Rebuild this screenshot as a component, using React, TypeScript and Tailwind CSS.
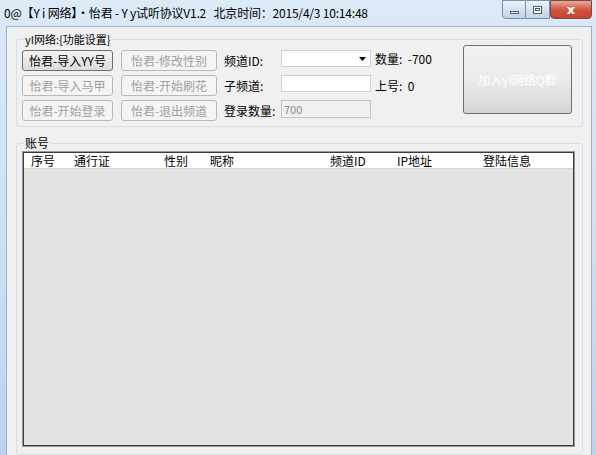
import React from 'react'

const FONT = "font-['Noto_Sans_CJK_SC','Noto_Sans',sans-serif]"

const BUTTONS = [
  { label: '怡君-导入YY号', on: true },
  { label: '怡君-修改性别', on: false },
  { label: '怡君-导入马甲', on: false },
  { label: '怡君-开始刷花', on: false },
  { label: '怡君-开始登录', on: false },
  { label: '怡君-退出频道', on: false },
]

const COLUMNS = [
  { label: '序号', w: 'w-[43px]' },
  { label: '通行证', w: 'w-[90px]' },
  { label: '性别', w: 'w-[46px]' },
  { label: '昵称', w: 'w-[120px]' },
  { label: '频道ID', w: 'w-[67px]' },
  { label: 'IP地址', w: 'w-[86px]' },
  { label: '登陆信息', w: 'flex-1' },
]

function WinButton({ kind }: { kind: 'min' | 'max' | 'close' }) {
  if (kind === 'close') {
    return (
      <div className="w-[42px] h-[19px] rounded-b-[4px] border border-[#7a4a4a] bg-gradient-to-b from-[#e9a99c] via-[#d2553f] to-[#c7422c] flex items-center justify-center">
        <span className="text-white text-[13px] font-bold leading-none font-['DejaVu_Sans',sans-serif]">x</span>
      </div>
    )
  }
  return (
    <div className={`w-[24px] h-[19px] border border-[#7e8ea3] ${kind === 'min' ? 'rounded-bl-[4px]' : 'border-l-0'} bg-gradient-to-b from-[#eef3f9] via-[#d6e2ef] to-[#c3d3e6] flex items-center justify-center`}>
      {kind === 'min' ? (
        <div className="w-[9px] h-[3px] bg-white border border-[#4d5c70] mt-[5px]" />
      ) : (
        <div className="w-[9px] h-[8px] bg-white border border-[#4d5c70] flex items-center justify-center">
          <div className="w-[5px] h-[3px] border border-[#4d5c70]" />
        </div>
      )}
    </div>
  )
}

export default function App() {
  return (
    <div className={`w-[596px] h-[455px] overflow-hidden flex flex-col bg-gradient-to-b from-[#dce9f7] via-[#cfe0f3] to-[#bcd3ec] text-[12px] text-black ${FONT}`}>
      {/* title bar */}
      <div className="h-[26px] shrink-0 flex items-start">
        <div className="pl-[4px] pt-[5px] leading-[16px] whitespace-pre text-[12px] tracking-[-0.2px]">
          0@【Y i 网络】·怡君 - Y y试听协议V1.2   北京时间：2015/4/3 10:14:48
        </div>
        <div className="ml-auto mr-[4px] flex">
          <WinButton kind="min" />
          <WinButton kind="max" />
          <WinButton kind="close" />
        </div>
      </div>

      {/* client area */}
      <div className="flex-1 ml-[6px] mr-[4px] bg-[#f0f0f0] border border-[#9fb1c6] border-b-0 pt-[5px] pl-[9px] pr-[8px] flex flex-col gap-[9px]">
        <fieldset className="border border-[#d5dfe5] rounded-[3px] h-[95px] pl-[5px] pr-[10px]">
          <legend className="ml-[2px] px-[1px] leading-[14px] text-[11px]">yI网络:{'{'}功能设置{'}'}</legend>
          <div className="flex items-start">
            <div className="grid grid-cols-[91px_96px] gap-x-[8px] gap-y-[4px] mt-[4px]">
              {BUTTONS.map(b => (
                <div
                  key={b.label}
                  className={`h-[21px] rounded-[3px] border flex items-center justify-center leading-none ${
                    b.on
                      ? 'border-[#707070] bg-gradient-to-b from-[#f3f3f3] to-[#dcdcdc] text-black'
                      : 'border-[#b8b8b8] bg-[#f4f4f4] text-[#a0a0a0]'
                  }`}
                >
                  {b.label}
                </div>
              ))}
            </div>

            <div className="ml-[7px] mt-[4px] grid grid-cols-[57px_90px_auto] gap-y-[4px]">
              <div className="h-[21px] flex items-center">频道ID:</div>
              <div className="h-[17px] bg-white border border-[#d0d0d0] flex items-center justify-end pr-[4px]">
                <svg width="7" height="4" viewBox="0 0 7 4"><path d="M0 0h7L3.5 4z" fill="#000" /></svg>
              </div>
              <div className="h-[17px] pl-[4px] flex items-center">数量:&nbsp;&nbsp;-700</div>

              <div className="h-[21px] flex items-center">子频道:</div>
              <div className="h-[17px] bg-white border border-[#d0d0d0]" />
              <div className="h-[21px] pl-[4px] flex items-center">上号:&nbsp;&nbsp;0</div>

              <div className="h-[21px] flex items-center">登录数量:</div>
              <div className="h-[18px] bg-[#f0f0f0] border border-[#c4c4c4] text-[#8a8a8a] flex items-center pl-[2px] text-[11px]">700</div>
              <div />
            </div>

            <div className="ml-auto -mt-[1px] w-[109px] h-[69px] rounded-[3px] border border-[#6e6e6e] bg-gradient-to-b from-[#f2f2f2] via-[#ebebeb] to-[#d5d5d5] flex items-center justify-center text-white text-[12px]">
              加入yI网络Q群
            </div>
          </div>
        </fieldset>

        <fieldset className="border border-[#d5dfe5] rounded-[3px] h-[319px] pl-[5px] pr-[7px] pb-[6px] flex flex-col">
          <legend className="ml-[2px] px-[1px] leading-[14px]">账号</legend>
          <div className="mt-[1px] h-[296px] border border-[#9a9a9a] flex flex-col">
            <div className="flex-1 border border-[#3a3a3a] bg-[#e3e3e3] flex flex-col">
              <div className="h-[16px] bg-white border-b border-[#d5d5d5] flex items-center">
                {COLUMNS.map(c => (
                  <div key={c.label} className={`${c.w} pl-[7px] leading-none whitespace-nowrap`}>{c.label}</div>
                ))}
              </div>
            </div>
          </div>
        </fieldset>
      </div>
    </div>
  )
}
